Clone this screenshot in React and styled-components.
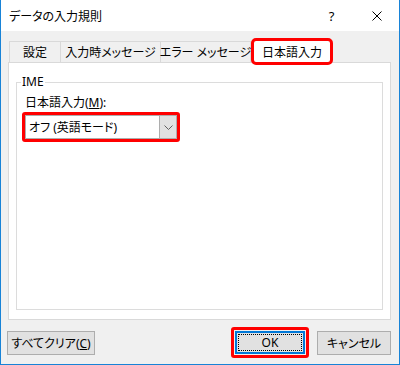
import React from 'react';
import styled, { createGlobalStyle } from 'styled-components';

const GlobalStyle = createGlobalStyle`
  body {
    margin: 0;
    background: #ffffff;
  }
  * {
    box-sizing: border-box;
  }
`;

const Window = styled.div`
  width: 400px;
  height: 365px;
  display: flex;
  flex-direction: column;
  background: #f0f0f0;
  border: 1px solid #1883d7;
  border-top: none;
  font-family: 'Noto Sans', 'Noto Sans CJK JP', sans-serif;
  font-feature-settings: 'palt';
  font-size: 12px;
  color: #000;
`;

const TitleBar = styled.div`
  height: 31px;
  flex-shrink: 0;
  display: flex;
  align-items: center;
  background: #ffffff;
`;

const Title = styled.div`
  flex: 1;
  padding-left: 8px;
  font-size: 12px;
`;

const CaptionButton = styled.div`
  width: 45px;
  height: 31px;
  display: flex;
  align-items: center;
  justify-content: center;
  font-size: 13px;
`;

const Body = styled.div`
  flex: 1;
  display: flex;
  flex-direction: column;
  padding: 10px 8px 6px 7px;
`;

const TabRow = styled.div`
  height: 21px;
  display: flex;
  padding-left: 1px;
  position: relative;
  z-index: 1;
`;

const Tab = styled.div`
  width: ${(p) => p.$width}px;
  display: flex;
  align-items: center;
  justify-content: center;
  border: 1px solid #d9d9d9;
  border-bottom: none;
  border-right: ${(p) => (p.$closed ? '1px solid #d9d9d9' : 'none')};
  background: #f0f0f0;
  white-space: nowrap;
`;

const ActiveTab = styled(Tab)`
  margin-left: 3px;
  background: #ffffff;
  border: none;
  border-radius: 2px;
  outline: 3px solid #ff0000;
`;

const Panel = styled.div`
  flex: 1;
  display: flex;
  flex-direction: column;
  background: #ffffff;
  border: 1px solid #d9d9d9;
  padding: 12px 7px 9px 7px;
`;

const Group = styled.fieldset`
  flex: 1;
  margin: 0;
  min-width: 0;
  border: 1px solid #dcdcdc;
  padding: 7px 5px 0 5px;
`;

const Legend = styled.legend`
  padding: 0 1px;
  margin-left: -1px;
  font-size: 12px;
  line-height: 14px;
`;

const FieldLabel = styled.label`
  display: block;
  margin-left: 3px;
  line-height: 14px;
  margin-bottom: 2px;
`;

const HotKey = styled.span`
  text-decoration: underline;
  text-underline-offset: 1px;
`;

const Highlight = styled.div`
  display: flex;
  width: fit-content;
  border: 3px solid #ff0000;
  border-radius: 3px;
  padding: ${(p) => p.$pad || 0}px;
`;

const Combo = styled.div`
  width: 152px;
  height: 24px;
  display: flex;
  border: 1px solid #adadad;
  background: #ffffff;
`;

const ComboText = styled.div`
  flex: 1;
  display: flex;
  align-items: center;
  padding-left: 3px;
`;

const ComboButton = styled.div`
  width: 17px;
  display: flex;
  align-items: center;
  justify-content: center;
  background: #e1e1e1;
  border-left: 1px solid #adadad;
`;

const Footer = styled.div`
  margin-top: 7px;
  margin-left: -1px;
  height: 31px;
  display: flex;
  align-items: center;
  justify-content: space-between;
`;

const ButtonGroup = styled.div`
  display: flex;
  align-items: center;
  gap: 8px;
`;

const Button = styled.button`
  width: ${(p) => p.$width}px;
  height: 24px;
  padding: 0;
  border: 1px solid #adadad;
  background: #e1e1e1;
  font-family: inherit;
  font-feature-settings: inherit;
  font-size: 12px;
  color: #000;
`;

const DefaultButton = styled(Button)`
  height: 23px;
  position: relative;
  border: 1px solid #0078d7;
  box-shadow: inset 0 0 0 1px #0078d7;

  &::after {
    content: '';
    position: absolute;
    inset: 2px;
    border: 1px dotted #000;
  }
`;

export default function App() {
  return (
    <>
      <GlobalStyle />
      <Window>
        <TitleBar>
          <Title>データの入力規則</Title>
          <CaptionButton>?</CaptionButton>
          <CaptionButton>
            <svg width="10" height="10" viewBox="0 0 10 10">
              <path d="M0.5 0.5 L9.5 9.5 M9.5 0.5 L0.5 9.5" stroke="#000" strokeWidth="1" fill="none" />
            </svg>
          </CaptionButton>
        </TitleBar>
        <Body>
          <TabRow>
            <Tab $width={51}>設定</Tab>
            <Tab $width={100}>入力時メッセージ</Tab>
            <Tab $width={91} $closed>エラー メッセージ</Tab>
            <ActiveTab $width={76}>日本語入力</ActiveTab>
          </TabRow>
          <Panel>
            <Group>
              <Legend>IME</Legend>
              <FieldLabel>
                日本語入力(<HotKey>M</HotKey>):
              </FieldLabel>
              <Highlight>
                <Combo>
                  <ComboText>オフ (英語モード)</ComboText>
                  <ComboButton>
                    <svg width="9" height="5" viewBox="0 0 9 5">
                      <polyline points="0.5,0.5 4.5,4.5 8.5,0.5" stroke="#606060" strokeWidth="1" fill="none" />
                    </svg>
                  </ComboButton>
                </Combo>
              </Highlight>
            </Group>
          </Panel>
          <Footer>
            <Button $width={88}>
              すべてクリア(<HotKey>C</HotKey>)
            </Button>
            <ButtonGroup>
              <Highlight $pad={1}>
                <DefaultButton $width={70}>OK</DefaultButton>
              </Highlight>
              <Button $width={74}>キャンセル</Button>
            </ButtonGroup>
          </Footer>
        </Body>
      </Window>
    </>
  );
}
